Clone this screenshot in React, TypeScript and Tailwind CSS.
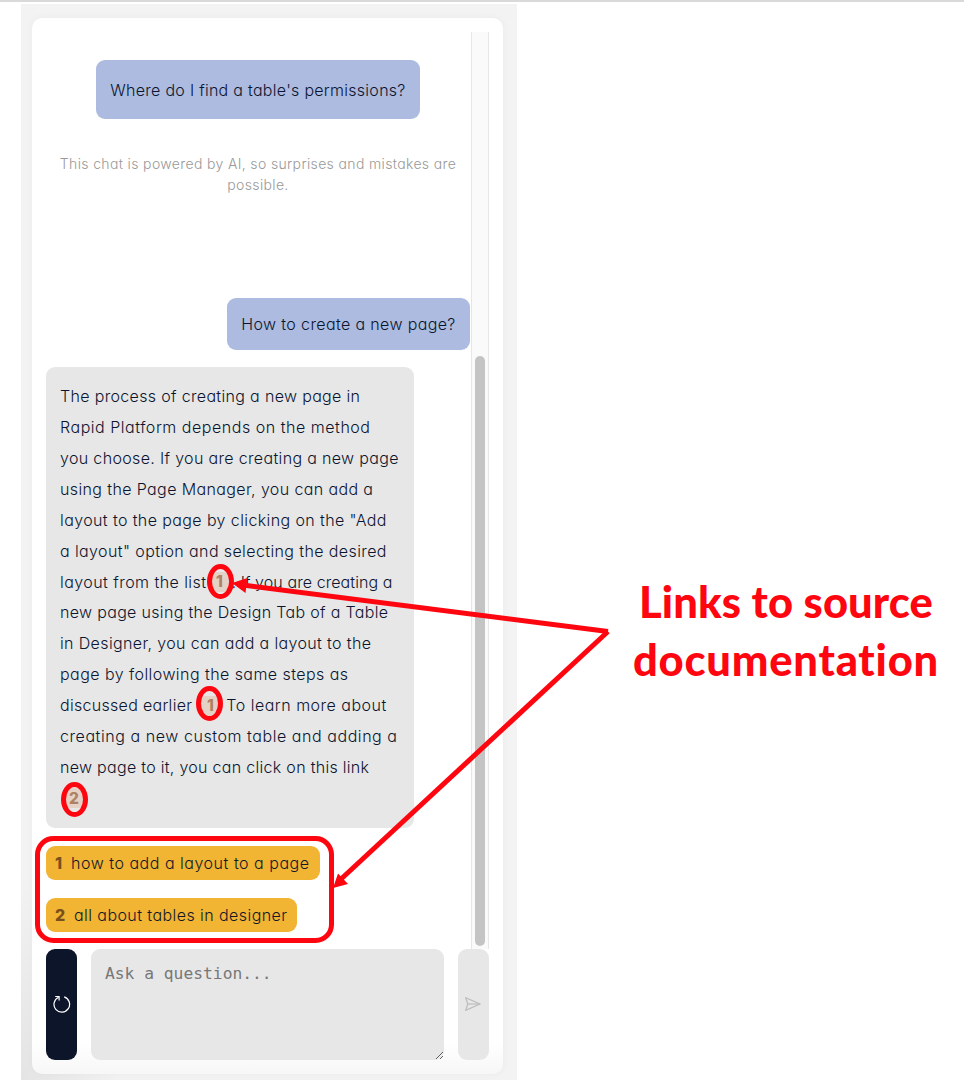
import { useLayoutEffect, useRef, useState } from "react";

type LineProps = { text: string; width: number };

/* A single line of text tracked out to an exact width. */
function Line({ text, width }: LineProps) {
  const ref = useRef<HTMLSpanElement>(null);
  const [spacing, setSpacing] = useState(0);
  useLayoutEffect(() => {
    if (ref.current) {
      const natural = ref.current.getBoundingClientRect().width;
      setSpacing((width - natural) / (text.length - 1));
    }
  }, [text, width]);
  return (
    <span ref={ref} className="inline-block whitespace-pre" style={{ letterSpacing: spacing }}>
      {text}
    </span>
  );
}

const opening: LineProps[] = [
  { text: "The process of creating a new page in", width: 300 },
  { text: "Rapid Platform depends on the method", width: 310 },
  { text: "you choose. If you are creating a new page", width: 338.5 },
  { text: "using the Page Manager, you can add a", width: 313 },
  { text: 'layout to the page by clicking on the "Add', width: 326.5 },
  { text: 'a layout" option and selecting the desired', width: 326.5 },
];

const middle: LineProps[] = [
  { text: "new page using the Design Tab of a Table", width: 328 },
  { text: "in Designer, you can add a layout to the", width: 311 },
  { text: "page by following the same steps as", width: 288 },
];

const closing: LineProps[] = [
  { text: "creating a new custom table and adding a", width: 337 },
  { text: "new page to it, you can click on this link", width: 309 },
];

function Citation({ n }: { n: number }) {
  return (
    <span className="inline-flex h-[20px] w-[18px] items-center justify-center rounded-sm bg-[#e5d2c6] text-[15.5px] leading-none font-extrabold text-[#b08063]">
      {n}
    </span>
  );
}

function Rows({ items }: { items: LineProps[] }) {
  return (
    <>
      {items.map((l) => (
        <div key={l.text} className="h-[30.93px]">
          <Line {...l} />
        </div>
      ))}
    </>
  );
}

function Source({ n, text, width }: LineProps & { n: number }) {
  return (
    <div className="flex h-[34px] w-fit items-center rounded-[9px] bg-[#f1b433] pr-[10px] pl-[9px] text-[#101829]">
      <span className={n === 1 ? "w-4 font-extrabold text-[#79501b]" : "w-[19px] font-extrabold text-[#79501b]"}>
        {n}
      </span>
      <Line text={text} width={width} />
    </div>
  );
}

export default function App() {
  return (
    <div className="relative h-[1080px] w-[964px] overflow-hidden border-t-2 border-[#d9d9d9] bg-white font-['Inter',sans-serif] text-[16px] font-[360] text-[#0b1530] [font-feature-settings:'cv11']">
      <div className="flex h-full">
        <div className="mt-[2px] ml-[21px] w-[496px] bg-[#f3f3f3] bg-linear-to-tr from-[#e4e4e4] to-[#f3f3f3] to-10% pt-[14px] pr-[14px] pl-[11px]">
          <div className="h-[1056px] rounded-[10px] bg-white bg-linear-to-b from-white from-97% to-[#f7f7f7] p-[14px] shadow-[0_0_8px_rgba(0,0,0,0.04)]">
            <div className="flex h-[917px]">
              <div className="flex w-[425px] flex-col">
                <div className="mt-[28px] ml-[50px] flex h-[59px] w-[324px] items-center justify-center rounded-[9px] bg-[#acbbdf]">
                  <Line text="Where do I find a table's permissions?" width={295} />
                </div>
                <div className="mt-[34px] flex h-[42px] w-[424px] flex-col items-center text-[14px] leading-[21px] text-[#999999]">
                  <Line text="This chat is powered by AI, so surprises and mistakes are" width={396} />
                  <Line text="possible." width={61} />
                </div>
                <div className="mt-[103px] mr-px flex h-[52px] w-[243px] items-center justify-center self-end rounded-[9px] bg-[#acbbdf]">
                  <Line text="How to create a new page?" width={214} />
                </div>
                <div className="mt-[17px] h-[461px] w-[368px] rounded-[9px] bg-[#e7e7e7] px-[14px] pt-[14px] leading-[31px]">
                  <Rows items={opening} />
                  <div className="flex h-[30.93px] items-center">
                    <Line text="layout from the list" width={146} />
                    <span className="ml-[4px] flex">
                      <Citation n={1} />
                    </span>
                    <span className="ml-[3px]">
                      <Line text=". If you are creating a" width={161} />
                    </span>
                  </div>
                  <Rows items={middle} />
                  <div className="flex h-[30.93px] items-center">
                    <Line text="discussed earlier" width={132} />
                    <span className="ml-[9px] flex">
                      <Citation n={1} />
                    </span>
                    <span className="ml-[7px]">
                      <Line text="To learn more about" width={160} />
                    </span>
                  </div>
                  <Rows items={closing} />
                  <div className="flex h-[30.93px] items-center pl-[5px]">
                    <Citation n={2} />
                  </div>
                </div>
                <div className="mt-[18px] flex flex-col gap-[18px]">
                  <Source n={1} text="how to add a layout to a page" width={238} />
                  <Source n={2} text="all about tables in designer" width={213} />
                </div>
              </div>
              <div className="flex w-[18px] justify-center border-x border-[#e6e6e6] bg-[#fafafa] pt-[324px]">
                <div className="h-[590px] w-[10px] rounded-full bg-[#c4c4c4]" />
              </div>
            </div>
            <div className="flex h-[111px] gap-[14px]">
              <button className="flex w-[31px] items-center justify-center rounded-[9px] bg-[#0c1529] pb-[2px]" aria-label="Reset">
                <svg width="18" height="18" viewBox="0 0 18 18" fill="none" stroke="#fff" strokeWidth="1.2">
                  <path d="M11.2 1.9A7.8 7.8 0 1 1 5.6 2.2" />
                  <path d="M2.2 1.5H6.1V5.4" />
                </svg>
              </button>
              <textarea
                placeholder="Ask a question..."
                className="w-[353px] resize rounded-[9px] bg-[#e7e7e7] px-[14px] pt-[13px] font-['DejaVu_Sans_Mono',monospace] text-[16.3px] leading-6 font-normal placeholder:text-[#777777]"
              />
              <button className="flex w-[31px] items-center justify-center rounded-[9px] bg-[#e7e7e7] pr-px pb-[2px]" aria-label="Send">
                <svg width="16" height="14" viewBox="0 0 16 14" fill="none" stroke="#bcbcbc" strokeWidth="1.2">
                  <path d="M.8.7 15 7 .8 13.3 2.7 7Z" />
                  <path d="M2.7 7H15" />
                </svg>
              </button>
            </div>
          </div>
        </div>
        <div className="mt-[570px] ml-[109px] flex w-[320px] flex-col items-center font-['Lato',sans-serif] text-[43.5px] leading-[58px] font-black text-[#fe0610]">
          <Line text="Links to source" width={294} />
          <Line text="documentation" width={306} />
        </div>
      </div>
      <svg className="pointer-events-none absolute -top-[2px] left-0" width="964" height="1080" fill="none" stroke="#fe0610">
        <g strokeWidth="5">
          <ellipse cx="220.5" cy="581.5" rx="11" ry="15" />
          <ellipse cx="209.5" cy="703.5" rx="11" ry="15" />
          <ellipse cx="74.5" cy="799.5" rx="11" ry="15" />
          <rect x="37.5" y="838.5" width="294" height="102" rx="16" />
          <path d="M243 585 608 631.5" />
          <path d="M608 631.5 340 880" />
        </g>
        <path d="m232 583 15.500-5-2 15ZM333 888l5-14.500 10 10.500Z" fill="#fe0610" stroke="none" />
      </svg>
    </div>
  );
}
